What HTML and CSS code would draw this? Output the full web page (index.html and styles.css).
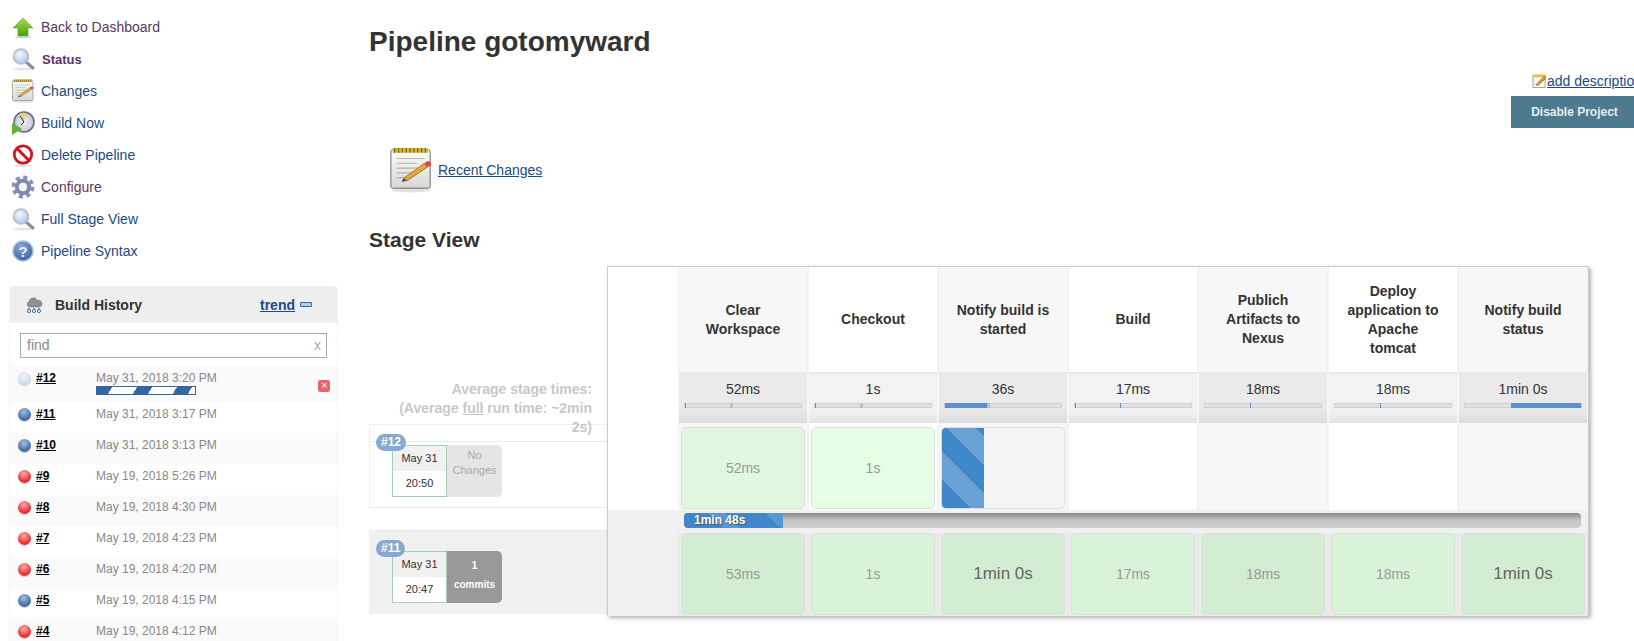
FILE: index.html
```html
<!DOCTYPE html>
<html lang="en">
<head>
    <meta charset="UTF-8">
    <title>gotomyward [Jenkins]</title>
    <link rel="stylesheet" href="styles.css">
</head>
<body>

    <svg class="sprite" width="0" height="0">
        <defs>
            <linearGradient id="gGreen" x1="0" y1="0" x2="0" y2="1"><stop offset="0" stop-color="#a6dc50"/><stop offset="1" stop-color="#46a012"/></linearGradient>
            <radialGradient id="gLens" cx="0.4" cy="0.35" r="0.7"><stop offset="0" stop-color="#f2f7fd"/><stop offset="1" stop-color="#a9c6e8"/></radialGradient>
            <radialGradient id="gClock" cx="0.5" cy="0.5" r="0.6"><stop offset="0" stop-color="#f4f4f4"/><stop offset="1" stop-color="#b9b9c6"/></radialGradient>
            <radialGradient id="gHelp" cx="0.4" cy="0.3" r="0.8"><stop offset="0" stop-color="#8aa9d6"/><stop offset="1" stop-color="#2f5c9e"/></radialGradient>
            <linearGradient id="gPaper" x1="0" y1="0" x2="0" y2="1"><stop offset="0" stop-color="#fbfbf8"/><stop offset="1" stop-color="#d8d8d4"/></linearGradient>

            <symbol id="i-up" viewBox="0 0 24 24">
                <path d="M12 3 L22 13 L17 13 L17 21 L7 21 L7 13 L2 13 Z" fill="url(#gGreen)" stroke="#4c9a1a" stroke-width=".5"/>
                <ellipse cx="12" cy="22" rx="8" ry="1" fill="#ccc"/>
            </symbol>
            <symbol id="i-search" viewBox="0 0 24 24">
                <ellipse cx="12" cy="22" rx="10" ry="1.3" fill="#e4e4e4"/>
                <line x1="15" y1="15" x2="22" y2="21" stroke="#8b8f97" stroke-width="3" stroke-linecap="round"/>
                <circle cx="10" cy="9.5" r="7.5" fill="url(#gLens)" stroke="#b4bac4" stroke-width="1.6"/>
            </symbol>
            <symbol id="i-notepad" viewBox="0 0 48 48">
                <ellipse cx="24" cy="45" rx="20" ry="2.5" fill="#e2e2e2"/>
                <rect x="3" y="3" width="41" height="40" rx="2" fill="url(#gPaper)" stroke="#666" stroke-width="1"/>
                <rect x="5" y="1" width="37" height="5" fill="#d9b93a"/>
                <path d="M7 1 v5 M11 1 v5 M15 1 v5 M19 1 v5 M23 1 v5 M27 1 v5 M31 1 v5 M35 1 v5 M39 1 v5" stroke="#7d6a14" stroke-width="1.4"/>
                <path d="M9 12 H38 M9 17 H30 M9 22 H38 M9 27 H26 M9 32 H20" stroke="#b5b5b5" stroke-width="1.2"/>
                <path d="M16 33 L38 17 L41 21 L20 35 Z" fill="#e5a83a" stroke="#8a5a14" stroke-width=".8"/>
                <path d="M16 33 L20 35 L14 36.5 Z" fill="#444"/>
                <path d="M38 17 L41 14.5 Q45 15 45 19 L41 21 Z" fill="#e0424a"/>
            </symbol>
            <symbol id="i-build" viewBox="0 0 24 24">
                <circle cx="13" cy="11" r="10" fill="url(#gClock)" stroke="#6c6c8a" stroke-width="1.6"/>
                <path d="M13 11 L9 2.5 A9 9 0 0 1 14 2 Z" fill="#e5d36a"/>
                <path d="M9 5 L13 11 L10 14" fill="none" stroke="#222" stroke-width="1"/>
                <path d="M1 12 L11 18 L1 24 Z" fill="#5cb82a"/>
            </symbol>
            <symbol id="i-stop" viewBox="0 0 24 24">
                <ellipse cx="12" cy="22.5" rx="9" ry="1.2" fill="#ddd"/>
                <circle cx="12" cy="11.5" r="8.7" fill="#fff" stroke="#d3161c" stroke-width="2.8"/>
                <line x1="6" y1="5.5" x2="18" y2="17.5" stroke="#d3161c" stroke-width="3"/>
            </symbol>
            <symbol id="i-gear" viewBox="0 0 24 24">
                <circle cx="12" cy="12" r="9.5" fill="none" stroke="#8a8fb8" stroke-width="4" stroke-dasharray="4 3.46"/>
                <circle cx="12" cy="12" r="6.2" fill="none" stroke="#8288b0" stroke-width="4"/>
                <circle cx="12" cy="12" r="4" fill="#f4f4f8"/>
            </symbol>
            <symbol id="i-help" viewBox="0 0 24 24">
                <circle cx="12" cy="12" r="10" fill="url(#gHelp)" stroke="#a9c0e0" stroke-width="1.5"/>
                <text x="12" y="17.5" text-anchor="middle" font-family="Liberation Sans" font-weight="700" font-size="15" fill="#e8eef8">?</text>
            </symbol>
            <symbol id="i-cloud" viewBox="0 0 18 18">
                <path d="M4 11 A3 3 0 0 1 4 5.5 A4.5 4.5 0 0 1 12.5 4.5 A3.3 3.3 0 0 1 14.5 11 Z" fill="#8f9194" stroke="#666" stroke-width=".5"/>
                <path d="M4 12 v2 M9 12 v2 M14 12 v2" stroke="#3465a4" stroke-width="1"/>
                <circle cx="4" cy="15" r="1.6" fill="none" stroke="#3465a4" stroke-width=".9"/>
                <circle cx="9" cy="15" r="1.6" fill="none" stroke="#3465a4" stroke-width=".9"/>
                <circle cx="14" cy="15" r="1.6" fill="none" stroke="#3465a4" stroke-width=".9"/>
            </symbol>
            <symbol id="i-edit" viewBox="0 0 16 16">
                <rect x="1" y="2" width="13" height="13" fill="#f6f6f0" stroke="#888" stroke-width=".8"/>
                <rect x="1" y="1" width="13" height="3" fill="#e4c23a"/>
                <path d="M4 12 L13 3 L15 5 L6 13 Z" fill="#d99a2a" stroke="#7a5210" stroke-width=".5"/>
            </symbol>
        </defs>
    </svg>

    <div class="page">
        <aside class="sidebar">
            <ul class="tasks">
                <li><svg class="task-icon"><use href="#i-up"/></svg><a class="visited" href="#">Back to Dashboard</a></li>
                <li><svg class="task-icon"><use href="#i-search"/></svg><a class="visited current" href="#">Status</a></li>
                <li><svg class="task-icon"><use href="#i-notepad"/></svg><a href="#">Changes</a></li>
                <li><svg class="task-icon"><use href="#i-build"/></svg><a href="#">Build Now</a></li>
                <li><svg class="task-icon"><use href="#i-stop"/></svg><a href="#">Delete Pipeline</a></li>
                <li><svg class="task-icon"><use href="#i-gear"/></svg><a class="visited" href="#">Configure</a></li>
                <li><svg class="task-icon"><use href="#i-search"/></svg><a href="#">Full Stage View</a></li>
                <li><svg class="task-icon"><use href="#i-help"/></svg><a href="#">Pipeline Syntax</a></li>
            </ul>

            <div class="history">
                <div class="history-head">
                    <svg class="cloud"><use href="#i-cloud"/></svg>
                    <span class="history-title">Build History</span>
                    <a class="trend" href="#">trend</a>
                    <span class="minus"></span>
                </div>
                <div class="history-search">
                    <span class="find">find</span>
                    <span class="find-x">x</span>
                </div>
                <div class="build-row first">
                    <span class="ball pale"></span>
                    <a class="build-link" href="#">#12</a>
                    <div class="build-date">May 31, 2018 3:20 PM<div class="build-progress"></div></div>
                    <span class="build-stop">&#10005;</span>
                </div>
                <div class="build-row"><span class="ball blue"></span><a class="build-link" href="#">#11</a><div class="build-date">May 31, 2018 3:17 PM</div></div>
                <div class="build-row"><span class="ball blue"></span><a class="build-link" href="#">#10</a><div class="build-date">May 31, 2018 3:13 PM</div></div>
                <div class="build-row"><span class="ball red"></span><a class="build-link" href="#">#9</a><div class="build-date">May 19, 2018 5:26 PM</div></div>
                <div class="build-row"><span class="ball red"></span><a class="build-link" href="#">#8</a><div class="build-date">May 19, 2018 4:30 PM</div></div>
                <div class="build-row"><span class="ball red"></span><a class="build-link" href="#">#7</a><div class="build-date">May 19, 2018 4:23 PM</div></div>
                <div class="build-row"><span class="ball red"></span><a class="build-link" href="#">#6</a><div class="build-date">May 19, 2018 4:20 PM</div></div>
                <div class="build-row"><span class="ball blue"></span><a class="build-link" href="#">#5</a><div class="build-date">May 19, 2018 4:15 PM</div></div>
                <div class="build-row"><span class="ball red"></span><a class="build-link" href="#">#4</a><div class="build-date">May 19, 2018 4:12 PM</div></div>
            </div>
        </aside>

        <main class="main">
            <h1>Pipeline gotomyward</h1>

            <div class="actions">
                <div class="add-desc"><svg class="edit-icon"><use href="#i-edit"/></svg><a href="#">add description</a></div>
                <button class="disable" type="button">Disable Project</button>
            </div>

            <div class="recent">
                <svg class="recent-icon"><use href="#i-notepad"/></svg>
                <a href="#">Recent Changes</a>
            </div>

            <h2>Stage View</h2>

            <section class="stage-view">
                <div class="avg-label">Average stage times:<br>(Average <u>full</u> run time: ~2min 2s)</div>

                <div class="run first-run">
                    <span class="run-badge">#12</span>
                    <div class="run-date"><div class="run-day">May 31</div><div class="run-time">20:50</div></div>
                    <div class="run-changes none">No Changes</div>
                </div>

                <div class="run second-run">
                    <span class="run-badge">#11</span>
                    <div class="run-date"><div class="run-day">May 31</div><div class="run-time">20:47</div></div>
                    <div class="run-changes"><span>1</span><span>commits</span></div>
                </div>

                <!-- floats over the run list, same as the real stage view -->
                <div class="stage-table">
                    <div class="grid head-row">
                        <div class="side"></div>
                        <div class="head odd">Clear Workspace</div>
                        <div class="head">Checkout</div>
                        <div class="head odd">Notify build is started</div>
                        <div class="head">Build</div>
                        <div class="head odd">Publich Artifacts to Nexus</div>
                        <div class="head">Deploy application to Apache tomcat</div>
                        <div class="head odd">Notify build status</div>
                    </div>

                    <div class="grid avg-row">
                        <div class="side"></div>
                        <div class="avg odd">52ms<div class="meter"><i style="width:1px"></i><b style="left:39%"></b></div></div>
                        <div class="avg">1s<div class="meter"><i style="width:1px"></i><b style="left:39%"></b></div></div>
                        <div class="avg odd">36s<div class="meter"><i style="width:36%"></i><b style="left:36%"></b></div></div>
                        <div class="avg">17ms<div class="meter"><i style="width:1px"></i><b class="blue-tick" style="left:39%"></b></div></div>
                        <div class="avg odd">18ms<div class="meter"><b class="blue-tick" style="left:39%"></b></div></div>
                        <div class="avg">18ms<div class="meter"><b class="blue-tick" style="left:39%"></b></div></div>
                        <div class="avg odd">1min 0s<div class="meter"><i style="left:40%;width:60%"></i></div></div>
                    </div>

                    <div class="grid cells-row">
                        <div class="side"></div>
                        <div class="col odd"><div class="cell">52ms</div></div>
                        <div class="col"><div class="cell light">1s</div></div>
                        <div class="col odd"><div class="cell running"><div class="running-fill"></div></div></div>
                        <div class="col"></div>
                        <div class="col odd"></div>
                        <div class="col"></div>
                        <div class="col odd"></div>
                    </div>

                    <div class="grid bar-row">
                        <div class="side gray"></div>
                        <div class="bar-wrap">
                            <div class="run-bar"><div class="run-bar-fill">1min 48s</div></div>
                        </div>
                    </div>

                    <div class="grid cells-row done">
                        <div class="side gray"></div>
                        <div class="col"><div class="cell dark">53ms</div></div>
                        <div class="col"><div class="cell">1s</div></div>
                        <div class="col"><div class="cell dark big">1min 0s</div></div>
                        <div class="col"><div class="cell">17ms</div></div>
                        <div class="col"><div class="cell dark">18ms</div></div>
                        <div class="col"><div class="cell">18ms</div></div>
                        <div class="col"><div class="cell dark big">1min 0s</div></div>
                    </div>
                </div>
            </section>
        </main>
    </div>

</body>
</html>
```

FILE: styles.css
```css
* {
    margin: 0;
    padding: 0;
    box-sizing: border-box;
}

html, body {
    height: 100%;
    overflow: hidden;
}

body {
    font-family: "Liberation Sans", Arial, sans-serif;
    font-size: 14px;
    color: #333;
    background: #fff;
}

a {
    color: #204a87;
}

.sprite {
    display: block;
    height: 0;
}

.page {
    display: flex;
    width: 1660px;
}

/* sidebar */
.sidebar {
    width: 369px;
    flex-shrink: 0;
    padding-top: 11px;
}

.tasks {
    list-style: none;
    padding-left: 11px;
}

.tasks li {
    display: flex;
    align-items: center;
    gap: 6px;
    height: 32px;
}

.tasks a {
    text-decoration: none;
}

.tasks a.visited {
    color: #5c3566;
}

.tasks a.current {
    font-weight: bold;
    font-size: 13px;
    margin-left: 1px;
}

.task-icon {
    width: 24px;
    height: 24px;
    flex-shrink: 0;
}

.history {
    width: 329px;
    margin: 19px 0 0 9px;
    border-left: 1px solid #f4f4f4;
    border-right: 1px solid #f4f4f4;
}

.history-head {
    display: flex;
    align-items: center;
    height: 37px;
    padding-left: 15px;
    background: #eee;
    border-radius: 4px 4px 0 0;
}

.cloud {
    width: 18px;
    height: 18px;
}

.history-title {
    margin-left: 12px;
    font-weight: bold;
    color: #333;
    width: 205px;
}

.trend {
    font-weight: bold;
}

.minus {
    display: inline-block;
    width: 12px;
    height: 5px;
    margin-left: 5px;
    background: #b9cbe4;
    border: 1px solid #3465a4;
    border-radius: 1px;
}

.history-search {
    display: flex;
    justify-content: space-between;
    align-items: center;
    height: 25px;
    margin: 10px 10px 8px;
    padding: 0 5px 1px 6px;
    border: 1px solid #aaa;
    color: #888;
}

.find-x {
    color: #aaa;
}

.build-row {
    display: flex;
    align-items: flex-start;
    height: 31px;
    padding: 5px 0 0 8px;
    font-size: 12px;
    line-height: 15px;
}

.build-row:nth-child(odd) {
    background: #fafafa;
}

.build-row.first {
    height: 36px;
    position: relative;
}

.ball {
    display: block;
    width: 13px;
    height: 13px;
    margin-top: 1px;
    border-radius: 50%;
    flex-shrink: 0;
    box-shadow: 0 1px 1px rgba(0, 0, 0, 0.2);
}

.ball.pale {
    background: radial-gradient(circle at 45% 35%, #f2f5fa, #bccce2);
}

.ball.blue {
    background: radial-gradient(circle at 45% 30%, #a5bedd, #3f6ea9 65%, #2f5688);
}

.ball.red {
    background: radial-gradient(circle at 45% 30%, #ffb0b0, #ee3338 60%, #c81e22);
}

.build-link {
    width: 60px;
    margin-left: 5px;
    font-weight: bold;
    color: #000;
}

.build-date {
    color: #888;
}

.build-progress {
    width: 100px;
    height: 9px;
    border: 1px solid #3465a4;
    background: repeating-linear-gradient(120deg, #3465a4 0, #3465a4 13px, #fff 13px, #fff 34.6px);
}

.build-stop {
    position: absolute;
    right: 7px;
    top: 14px;
    width: 12px;
    height: 12px;
    font-size: 8px;
    line-height: 12px;
    text-align: center;
    color: #fff;
    background: #e8666a;
    border-radius: 2px;
}

/* main column */
.main {
    flex: 1;
    position: relative;
}

h1 {
    font-size: 28px;
    line-height: 30px;
    margin-top: 27px;
    color: #333;
}

.actions {
    height: 74px;
    padding-top: 15px;
}

.add-desc {
    display: flex;
    align-items: center;
    width: 128px;
    height: 17px;
    margin-left: 1163px;
}

.edit-icon {
    width: 15px;
    height: 16px;
    flex-shrink: 0;
}

.disable {
    display: block;
    margin: 7px 0 0 1142px;
    width: 135px;
    height: 32px;
    padding-right: 8px;
    border: 1px solid #4d7a8f;
    background: #4d7a8f;
    color: #e6ecef;
    font: bold 12px "Liberation Sans", Arial, sans-serif;
}

.recent {
    display: flex;
    align-items: center;
    gap: 4px;
    margin: 15px 0 0 19px;
}

.recent-icon {
    width: 46px;
    height: 48px;
}

h2 {
    margin-top: 34px;
    font-size: 21px;
    line-height: 24px;
    color: #333;
}

/* stage view */
.stage-view {
    position: relative;
    width: 238px;
    margin-top: 14px;
    padding-top: 114px;
}

.avg-label {
    position: relative;
    z-index: 1;
    width: 200px;
    height: 44px;
    margin-left: 23px;
    line-height: 19px;
    font-weight: bold;
    color: #c8c8c8;
    text-align: right;
}

.run {
    display: flex;
    position: relative;
    font-size: 11px;
}

.first-run {
    height: 84px;
    padding: 20px 0 0 22px;
    border: 1px solid #eee;
    border-right: 0;
    background: linear-gradient(#fff 16px, #e8e8e8 16px, #e8e8e8 17px, #fff 17px);
}

.second-run {
    margin-top: 22px;
    height: 84px;
    padding: 20px 0 0 23px;
    background: #f1f1f1;
    border-top: 1px solid #e8e8e8;
}

.run-badge {
    position: absolute;
    left: 7px;
    top: 9px;
    z-index: 1;
    padding: 0 5px;
    height: 17px;
    line-height: 17px;
    border-radius: 9px;
    background: #85a9d0;
    color: #fff;
    font-weight: bold;
    font-size: 12px;
}

.first-run .run-badge {
    left: 6px;
}

.run-date {
    width: 55px;
    height: 52px;
    border: 1px solid #a4cfb4;
    background: #fff;
    text-align: center;
    color: #333;
}

.run-day {
    height: 25px;
    line-height: 25px;
    background: #f1f1f1;
}

.run-time {
    line-height: 25px;
}

.run-changes {
    display: flex;
    flex-direction: column;
    justify-content: center;
    width: 55px;
    height: 52px;
    padding-bottom: 4px;
    text-align: center;
    font-size: 10px;
    line-height: 19px;
    font-weight: bold;
    color: #fff;
    background: #999;
    border-radius: 0 5px 5px 0;
}

.run-changes.none {
    display: block;
    padding: 3px 0 0;
    font-size: 11px;
    font-weight: normal;
    line-height: 15px;
    color: #aaa;
    background: #e5e5e5;
}

.stage-table {
    position: absolute;
    z-index: 2;
    left: 238px;
    top: 0;
    width: 982px;
    height: 350px;
    background: #fff;
    border: 1px solid #ccc;
    box-shadow: 2px 2px 4px rgba(0, 0, 0, 0.3);
}

.grid {
    display: grid;
    grid-template-columns: 70px repeat(7, 130px);
}

.side.gray {
    background: #f1f1f1;
}

.head {
    display: flex;
    align-items: center;
    justify-content: center;
    height: 105px;
    padding: 0 17px;
    text-align: center;
    font-weight: bold;
    line-height: 19px;
    color: #333;
    background: #fff;
    border-right: 1px solid #f2f2f2;
    border-left: 1px solid #f2f2f2;
}

.head.odd {
    background: #f7f7f7;
}

.avg {
    height: 51px;
    padding-top: 6px;
    text-align: center;
    line-height: 18px;
    background: linear-gradient(#f2f2f2 75%, #e2e2e2);
    border-top: 2px solid #e8e8e8;
    border-right: 1px solid #f6f6f6;
    border-left: 1px solid #f6f6f6;
}

.avg.odd {
    background: linear-gradient(#eaeaea 70%, #dcdcdc);
}

.meter {
    position: relative;
    height: 5px;
    margin: 5px 5px 0;
    background: #e2e2e2;
    border: 1px solid #d0d0d0;
}

.meter i {
    position: absolute;
    left: 0;
    top: -1px;
    height: 5px;
    background: #5b8fd0;
}

.meter b {
    position: absolute;
    top: -1px;
    width: 3px;
    height: 5px;
    background: #c0c0c0;
}

.meter b.blue-tick {
    width: 1px;
    background: #5b8fd0;
}

.cells-row {
    height: 87px;
}

.col {
    height: 87px;
    padding: 4px 2px 1px;
    background: #fff;
    border-left: 1px solid #f2f2f2;
    border-right: 1px solid #f2f2f2;
}

.col.odd {
    background: #f7f7f7;
}

.cell {
    display: flex;
    align-items: center;
    justify-content: center;
    height: 82px;
    font-size: 14px;
    color: #999;
    background: #dff8df;
    border: 1px solid #ddd;
    border-radius: 5px;
}

.cell.light {
    background: #e5ffe5;
}

.cell.running {
    justify-content: flex-start;
    align-items: stretch;
    background: #f5f5f5;
    overflow: hidden;
}

.running-fill {
    width: 42px;
    background: repeating-linear-gradient(45deg, #3f87c8 0, #3f87c8 20px, #6ba2d6 20px, #6ba2d6 40px);
}

.bar-wrap {
    grid-column: 2 / -1;
    height: 23px;
    padding: 3px 7px 0 6px;
    background: #f1f1f1;
}

.run-bar {
    height: 15px;
    border-radius: 4px;
    background: linear-gradient(#8a8a8a, #c6c6c6 50%, #cfcfcf);
    overflow: hidden;
}

.run-bar-fill {
    width: 99px;
    height: 15px;
    padding-left: 10px;
    line-height: 14px;
    font-size: 12px;
    font-weight: bold;
    color: #fff;
    text-shadow: 1px 1px 1px #555;
    background: repeating-linear-gradient(45deg, #3f87c8 0, #3f87c8 28px, #5a98d2 28px, #5a98d2 40px);
}

.cells-row.done {
    height: 83px;
}

.done .col {
    height: 83px;
    padding: 0 2px;
    background: #ececec;
    border: 0;
    border-left: 1px solid #e8e8e8;
    border-right: 1px solid #e8e8e8;
}

.done .cell {
    background: #d9f3d9;
}

.done .cell.dark {
    background: #d3edd3;
}

.done .cell.big {
    font-size: 17px;
    color: #666;
}
```
